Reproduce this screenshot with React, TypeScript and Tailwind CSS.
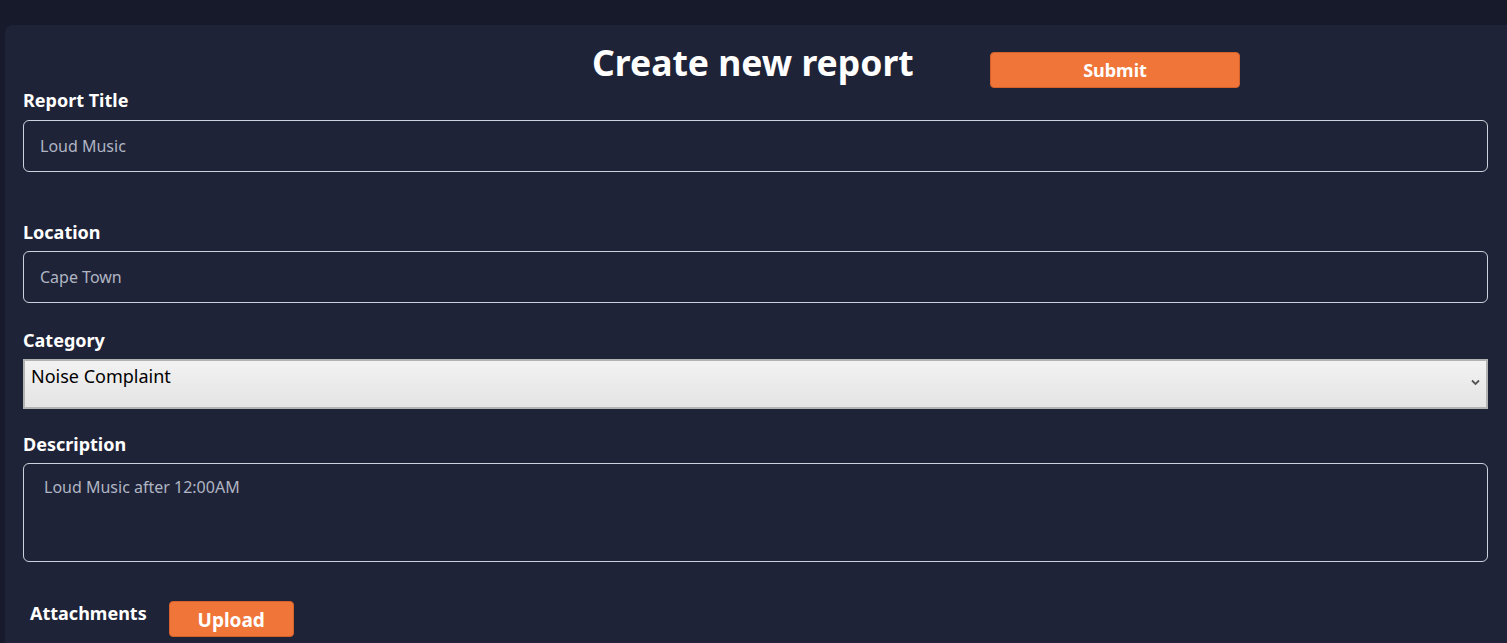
import { useState } from "react";

const fieldClass =
  "w-full h-[52px] rounded-md border border-[#cdd1dc] bg-transparent px-4 text-[16px] text-[#b0b5c3] outline-none";

function Label({ children }: { children: string }) {
  return (
    <label className="block text-[18px] leading-6 font-bold text-white">
      {children}
    </label>
  );
}

export default function App() {
  const [title, setTitle] = useState("Loud Music");
  const [location, setLocation] = useState("Cape Town");
  const [category, setCategory] = useState("Noise Complaint");
  const [description, setDescription] = useState("Loud Music after 12:00AM");

  return (
    <div
      className="min-h-[643px] bg-[#171a2a] pt-[25px] pl-[5px] overflow-hidden"
      style={{ fontFamily: '"Noto Sans", "Open Sans", sans-serif' }}
    >
      <div className="min-h-[618px] w-[1520px] rounded-tl-lg bg-[#1f2337] pl-[18px] pt-[8px]">
        <div className="w-[1465px]">
          {/* Header */}
          <div className="flex h-[55px] items-start">
            <h1 className="ml-[569px] mt-[5px] w-[319px] whitespace-nowrap text-[35.5px] leading-[48px] font-bold text-white">
              Create new report
            </h1>
            <button className="ml-[79px] mt-[19px] h-[36px] w-[250px] rounded-[4px] border border-[#d5612a] bg-[#f07539] text-[18px] font-bold text-white">
              Submit
            </button>
          </div>

          {/* Report Title */}
          <Label>Report Title</Label>
          <input
            className={`${fieldClass} mt-2`}
            value={title}
            onChange={(e) => setTitle(e.target.value)}
          />

          {/* Location */}
          <div className="mt-[48px]">
            <Label>Location</Label>
          </div>
          <input
            className={`${fieldClass} mt-[7px] h-[51px]`}
            value={location}
            onChange={(e) => setLocation(e.target.value)}
          />

          {/* Category */}
          <div className="mt-[25px]">
            <Label>Category</Label>
          </div>
          <div className="relative mt-[7px]">
            <select
              className="block h-[50px] w-full appearance-none border-2 border-[#b3b3b3] bg-gradient-to-b from-[#f2f2f2] to-[#e4e4e4] pl-[6px] pb-[16px] text-[18px] text-black outline-none"
              value={category}
              onChange={(e) => setCategory(e.target.value)}
            >
              <option>Noise Complaint</option>
              <option>Road Damage</option>
              <option>Water Leak</option>
              <option>Power Outage</option>
            </select>
            <svg
              className="pointer-events-none absolute right-[8px] top-[20px]"
              width="9"
              height="7"
              viewBox="0 0 9 7"
            >
              <path d="M1 1.5 L4.5 5 L8 1.5" fill="none" stroke="#555" strokeWidth="1.8" />
            </svg>
          </div>

          {/* Description */}
          <div className="mt-[23px]">
            <Label>Description</Label>
          </div>
          <textarea
            className="mt-[7px] block h-[99px] w-full resize-none rounded-md border border-[#cdd1dc] bg-transparent px-5 pt-[11px] text-[16px] leading-6 text-[#b0b5c3] outline-none"
            value={description}
            onChange={(e) => setDescription(e.target.value)}
          />

          {/* Attachments */}
          <div className="mt-[39px] flex items-start pl-[7px]">
            <span className="text-[18px] leading-6 font-bold text-white">
              Attachments
            </span>
            <button className="ml-[22px] h-[36px] w-[125px] rounded-[4px] border border-[#d5612a] bg-[#f07539] pt-[2px] text-[19px] font-bold text-white">
              Upload
            </button>
          </div>
        </div>
      </div>
    </div>
  );
}
